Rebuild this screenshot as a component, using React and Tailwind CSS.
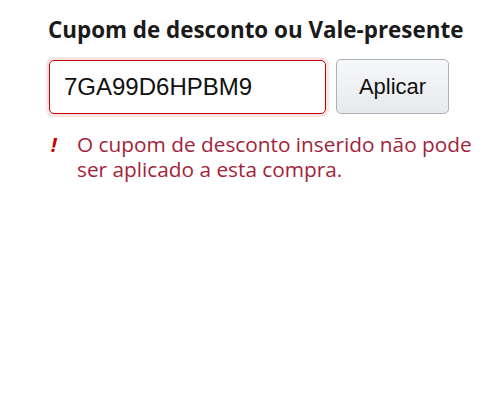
export default function App() {
  return (
    <div className="min-h-screen bg-white pl-[48px] pt-[16px]" style={{ fontFamily: '"Open Sans", sans-serif' }}>
      {/* Titulo */}
      <h2 className="text-[22.4px] font-bold leading-[28px] text-[#1a1a1a]">
        Cupom de desconto ou Vale-presente
      </h2>

      {/* Campo + botao */}
      <div className="mt-[15px] flex items-center gap-[10px] pl-[1px]">
        <input
          type="text"
          defaultValue="7GA99D6HPBM9"
          className="h-[54px] w-[277px] rounded-[5px] border border-[#c40000] pl-[14px] text-[24px] text-[#111111] shadow-[0_0_0_3px_#fbe4e6] outline-none"
          style={{ fontFamily: '"Liberation Sans", Arial, sans-serif' }}
        />
        <button
          type="button"
          className="h-[55px] w-[113px] rounded-[5px] border border-[#adb1b8] bg-gradient-to-b from-[#f7f8fa] to-[#e7e9ec] text-[22px] text-[#111111]"
          style={{ fontFamily: '"Liberation Sans", Arial, sans-serif' }}
        >
          Aplicar
        </button>
      </div>

      {/* Mensagem de erro */}
      <div className="mt-[18px] flex items-start">
        <span className="w-[29px] pl-[3px] text-[20px] font-bold italic leading-[25px] text-[#c40000]">!</span>
        <p className="w-[410px] text-[20.8px] leading-[25px] text-[#a3233a]">
          O cupom de desconto inserido não pode ser aplicado a esta compra.
        </p>
      </div>
    </div>
  )
}
